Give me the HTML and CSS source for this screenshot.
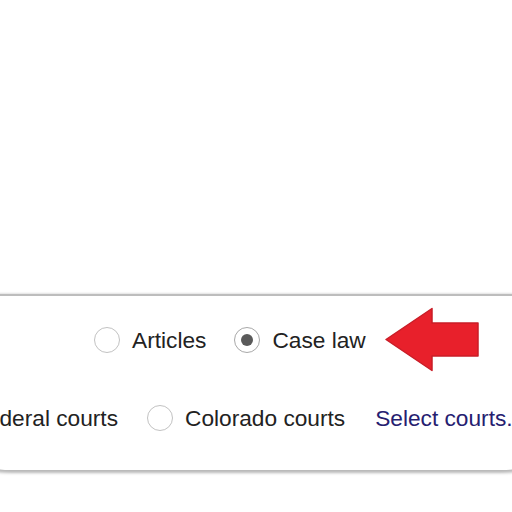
FILE: index.html
```html
<!DOCTYPE html>
<html>
<head>
<meta charset="utf-8">
<link rel="stylesheet" href="styles.css">
</head>
<body>
<div class="page">
  <div class="spacer"></div>
  <div class="card">
    <div class="row row-type">
      <label class="opt"><span class="radio"></span><span class="label">Articles</span></label>
      <label class="opt"><span class="radio checked"></span><span class="label">Case law</span></label>
      <svg class="arrow" width="96" height="65" viewBox="-1 -1 96 65">
        <path d="M1 31.5 L47 0.5 L47 15 L93 15 L93 48 L47 48 L47 62.5 Z" fill="#e8202b" stroke="#c91d27" stroke-width="1.5" stroke-linejoin="round"/>
      </svg>
    </div>
    <div class="row row-courts">
      <label class="opt"><span class="radio"></span><span class="label">Federal courts</span></label>
      <label class="opt"><span class="radio"></span><span class="label">Colorado courts</span></label>
      <a class="link">Select courts...</a>
    </div>
  </div>
</div>
</body>
</html>
```
FILE: styles.css
```css
html, body {
  margin: 0;
  padding: 0;
  background: #ffffff;
  overflow: hidden;
}
.page {
  width: 512px;
  height: 512px;
  overflow: hidden;
  font-family: "Liberation Sans", Arial, sans-serif;
  font-size: 22.7px;
  color: #222222;
}
.spacer {
  height: 294px;
}
.card {
  margin: 0 -20px;
  padding: 28px 20px 36px;
  border-top: 2px solid #bdbdbd;
  background: #ffffff;
  box-shadow: 0 3px 3px rgba(0, 0, 0, 0.28), 0 -1px 2px rgba(0, 0, 0, 0.12);
  border-radius: 0 0 30px 30px / 0 0 10px 10px;
}
.row {
  display: flex;
  align-items: center;
  height: 32px;
  white-space: nowrap;
}
.row-type {
  margin-left: 94px;
}
.row-courts {
  margin-top: 46px;
  margin-left: -65px;
}
.row-courts .opt {
  margin-right: 29px;
}
.opt {
  display: flex;
  align-items: center;
  margin-right: 28px;
}
.radio {
  box-sizing: border-box;
  width: 26px;
  height: 26px;
  border-radius: 50%;
  border: 1.5px solid #c2c2c2;
  margin-right: 12px;
  display: flex;
  align-items: center;
  justify-content: center;
  background: #fff;
}
.radio.checked {
  border-color: #a8a8a8;
}
.radio.checked::after {
  content: "";
  width: 12px;
  height: 12px;
  border-radius: 50%;
  background: #5a5a5a;
}
.label {
  line-height: 32px;
}
.link {
  color: #262070;
  margin-left: 1px;
}
.arrow {
  margin: -17px 0 -16px -10px;
  flex: none;
}
```
